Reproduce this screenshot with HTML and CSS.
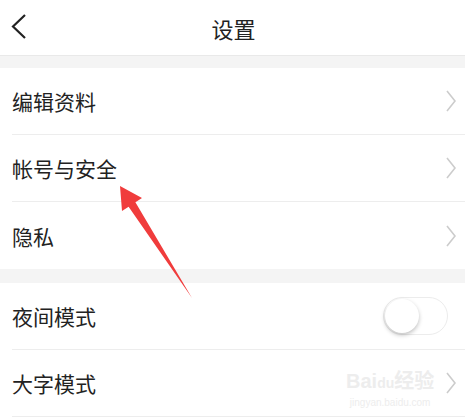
FILE: index.html
```html
<!DOCTYPE html>
<html lang="zh-CN">
<head>
    <meta charset="UTF-8">
    <meta name="viewport" content="width=device-width, initial-scale=1.0">
    <title>设置</title>
    <link rel="stylesheet" href="styles.css">
</head>
<body>
    <div class="page">
        <div class="topbar">
            <svg class="back" width="20" height="30" viewBox="0 0 20 30">
                <polyline points="14,2 2,13.5 14,25" fill="none" stroke="#222" stroke-width="2.2"/>
            </svg>
            <div class="title">设置</div>
        </div>

        <div class="gap"></div>

        <div class="group">
            <div class="row">
                <span class="label">编辑资料</span>
                <svg class="chev" width="10" height="22" viewBox="0 0 10 22"><polyline points="1,1 9,11 1,21" fill="none" stroke="#ccc" stroke-width="1.6"/></svg>
            </div>
            <div class="row">
                <span class="label">帐号与安全</span>
                <svg class="chev" width="10" height="22" viewBox="0 0 10 22"><polyline points="1,1 9,11 1,21" fill="none" stroke="#ccc" stroke-width="1.6"/></svg>
            </div>
            <div class="row last">
                <span class="label">隐私</span>
                <svg class="chev" width="10" height="22" viewBox="0 0 10 22"><polyline points="1,1 9,11 1,21" fill="none" stroke="#ccc" stroke-width="1.6"/></svg>
            </div>
        </div>

        <div class="gap wide"></div>

        <div class="group">
            <div class="row">
                <span class="label">夜间模式</span>
                <div class="switch"><div class="knob"></div></div>
            </div>
            <div class="row">
                <span class="label">大字模式</span>
                <svg class="chev" width="10" height="22" viewBox="0 0 10 22"><polyline points="1,1 9,11 1,21" fill="none" stroke="#ccc" stroke-width="1.6"/></svg>
            </div>
        </div>

        <!-- 标注箭头 -->
        <svg class="arrow" width="465" height="420" viewBox="0 0 465 420">
            <polygon points="120,186 142,198 135.4,202.3 192,298 128.6,206.7 122,211" fill="#f03c3c"/>
        </svg>

        <div class="watermark">
            <div class="wm-logo">Bai<span class="wm-du">du</span>经验</div>
            <div class="wm-url">jingyan.baidu.com</div>
        </div>
    </div>
</body>
</html>
```

FILE: styles.css
```css
* {
    box-sizing: border-box;
}
body {
    margin: 0;
    background: #fff;
    font-family: "Noto Sans CJK SC", "Noto Sans", sans-serif;
    color: #222;
}
.page {
    position: relative;
    width: 465px;
    height: 420px;
    overflow: hidden;
}
.topbar {
    position: relative;
    height: 56px;
    display: flex;
    align-items: center;
    justify-content: center;
    border-bottom: 1px solid #e9e9e9;
}
.back {
    position: absolute;
    left: 11px;
    top: 13px;
}
.title {
    font-size: 22px;
    color: #222;
    margin-left: 2px;
}
.gap {
    height: 12px;
    background: #f4f4f4;
}
.gap.wide {
    height: 14px;
}
.group {
    background: #fff;
}
.row {
    height: 67px;
    margin-left: 12px;
    padding-right: 9px;
    display: flex;
    align-items: center;
    justify-content: space-between;
    border-bottom: 1px solid #ededed;
}
.row.last {
    border-bottom: none;
}
.label {
    font-size: 21px;
    color: #222;
}
.chev {
    display: block;
}
.switch {
    width: 65px;
    height: 38px;
    border-radius: 19px;
    border: 1px solid #ececec;
    background: #fff;
    margin-right: 8px;
    padding: 1px;
}
.knob {
    width: 34px;
    height: 34px;
    border-radius: 50%;
    background: #fff;
    box-shadow: 0 2px 4px rgba(0, 0, 0, 0.25);
}
.arrow {
    position: absolute;
    left: 0;
    top: 0;
    pointer-events: none;
}
.watermark {
    position: absolute;
    left: 346px;
    top: 368px;
    text-align: center;
    color: #ededed;
    font-family: "Liberation Sans", sans-serif;
}
.wm-logo {
    font-size: 20px;
    font-weight: bold;
    line-height: 26px;
    font-family: "Liberation Sans", "Noto Sans CJK SC", sans-serif;
}
.wm-du {
    font-size: 14px;
}
.wm-url {
    font-size: 10px;
    line-height: 14px;
}
```
